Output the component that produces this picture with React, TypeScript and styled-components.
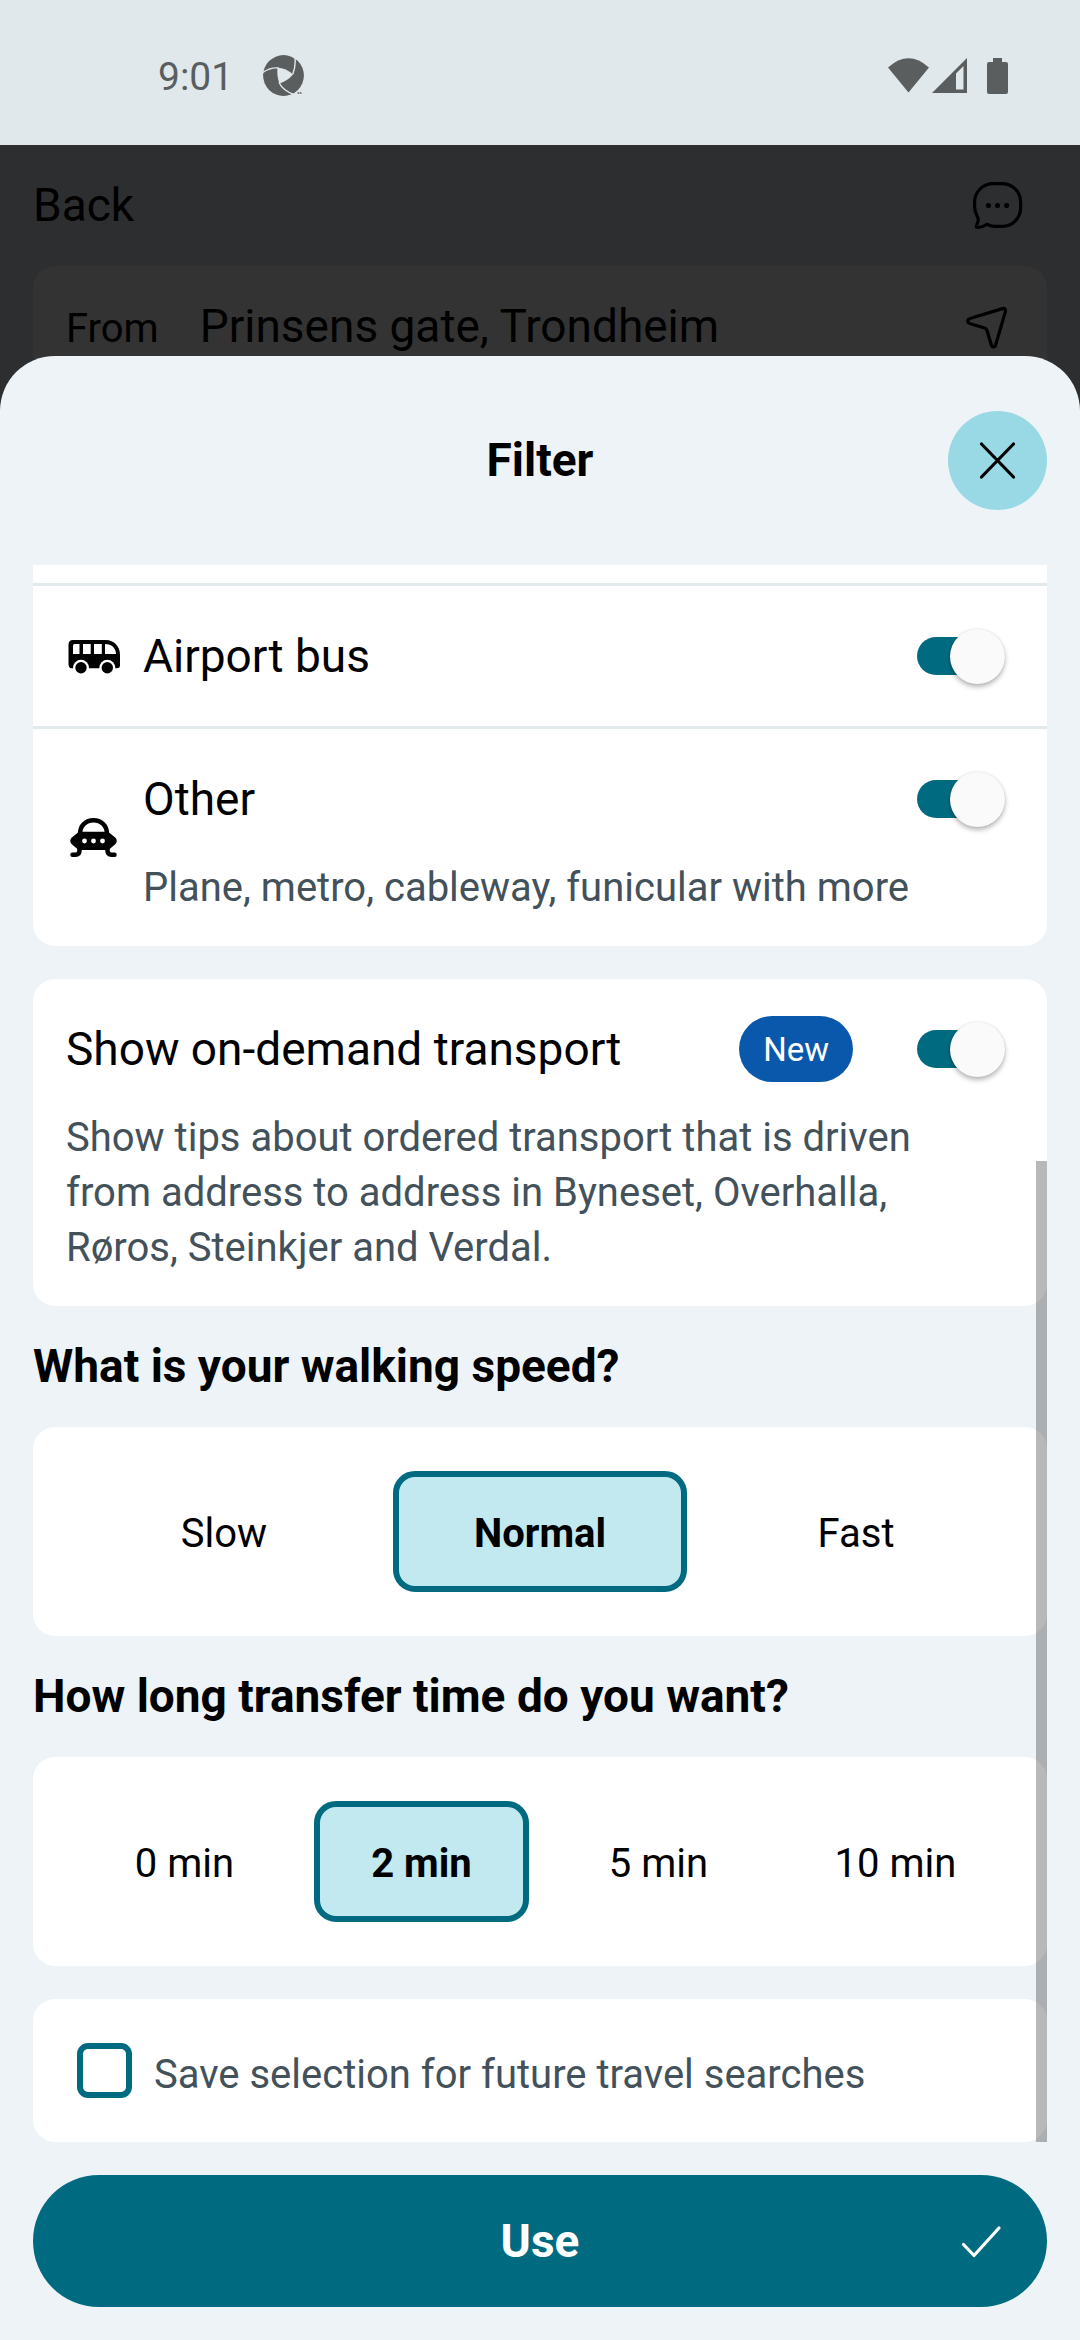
import React, { useState } from "react";
import styled, { createGlobalStyle } from "styled-components";

const color = {
  status: "#e0e8eb",
  statusInk: "#5b5e5f",
  dimmedPage: "#2d2e30",
  dimmedCard: "#333333",
  sheet: "#edf3f6",
  card: "#ffffff",
  line: "#e3eaed",
  ink: "#000000",
  inkSoft: "#43515b",
  teal: "#006b80",
  tealSoft: "#c2e9f0",
  aqua: "#99d9e5",
  badge: "#0a58ab",
};

const GlobalStyle = createGlobalStyle`
  *, *::before, *::after { box-sizing: border-box; }
  body {
    margin: 0;
    font-family: Roboto, "Liberation Sans", sans-serif;
    font-size: 46px;
    line-height: 55px;
    color: ${color.ink};
    background: ${color.sheet};
  }
  h1, h2, p, fieldset { margin: 0; padding: 0; border: 0; min-width: 0; }
  button, input { font: inherit; margin: 0; }
`;

const Screen = styled.div`
  display: flex;
  flex-direction: column;
  min-height: 100vh;
`;

/* ---------- status bar ---------- */

const StatusBar = styled.header`
  display: flex;
  align-items: center;
  justify-content: space-between;
  height: 145px;
  padding: 6px 72px 0 158px;
  background: ${color.status};
  color: ${color.statusInk};
`;

const StatusGroup = styled.div<{ $gap: number }>`
  display: flex;
  align-items: center;
  gap: ${(p) => p.$gap}px;
`;

const Clock = styled.time`
  padding-top: 4px;
  font-size: 39px;
`;

/* ---------- dimmed page and sheet, stacked in one grid cell ---------- */

const Stage = styled.div`
  flex: 1;
  display: grid;
  grid-template-columns: minmax(0, 1fr);
  background: ${color.dimmedPage};
`;

const DimmedPage = styled.div`
  grid-area: 1 / 1;
  align-self: start;
`;

const TopBar = styled.div`
  display: flex;
  align-items: center;
  justify-content: space-between;
  padding: 33px 55px 33px 33px;
`;

const FromCard = styled.div`
  display: flex;
  align-items: center;
  margin: 0 33px;
  padding: 33px;
  border-radius: 22px;
  background: ${color.dimmedCard};
`;

const FromText = styled.div`
  flex: 1;
  display: flex;
  align-items: baseline;
  gap: 41px;
`;

const FromLabel = styled.span`
  font-size: 40px;
`;

const Sheet = styled.main`
  grid-area: 1 / 1;
  display: flex;
  flex-direction: column;
  margin-top: 211px;
  padding: 0 33px 33px;
  border-radius: 55px 55px 0 0;
  background: ${color.sheet};
`;

const SheetHeader = styled.div`
  display: grid;
  grid-template-columns: 1fr auto 1fr;
  align-items: center;
  padding: 55px 0;
`;

const SheetTitle = styled.h1`
  grid-column: 2;
  font-size: 46px;
  font-weight: 700;
`;

const CloseButton = styled.button`
  justify-self: end;
  display: grid;
  place-items: center;
  width: 99px;
  height: 99px;
  padding: 0;
  border: 0;
  border-radius: 50%;
  color: ${color.ink};
  background: ${color.aqua};
`;

const ScrollArea = styled.div`
  position: relative;
`;

const ScrollThumb = styled.div`
  position: absolute;
  right: 0;
  bottom: 0;
  width: 11px;
  height: 62.2%;
  background: rgba(0, 0, 0, 0.28);
`;

/* ---------- cards ---------- */

const Card = styled.section<{ $cutTop?: boolean; $gapAfter?: boolean }>`
  padding-top: ${(p) => (p.$cutTop ? 18 : 0)}px;
  margin-bottom: ${(p) => (p.$gapAfter ? 33 : 0)}px;
  border-radius: ${(p) => (p.$cutTop ? "0 0 22px 22px" : "22px")};
  background: ${color.card};
`;

const SaveCard = styled(Card)`
  margin-top: 33px;
`;

const Row = styled.div<{ $divided?: boolean }>`
  display: flex;
  align-items: center;
  gap: 22px;
  padding: 33px;
  border-top: ${(p) => (p.$divided ? `3px solid ${color.line}` : "0")};
`;

const RowBody = styled.div`
  flex: 1;
  display: flex;
  flex-direction: column;
  gap: 22px;
`;

const RowHead = styled.div`
  display: flex;
  align-items: center;
  gap: 64px;
  height: 74px;
`;

const RowLabel = styled.label`
  flex: 1;
`;

const Description = styled.p`
  max-width: 880px;
  padding-top: 2px;
  margin-bottom: -2px;
  font-size: 40px;
  color: ${color.inkSoft};
`;

const Badge = styled.span`
  padding: 6px 24px 5px;
  border-radius: 33px;
  font-size: 33px;
  color: #ffffff;
  background: ${color.badge};
`;

const Switch = styled.input`
  appearance: none;
  display: grid;
  align-items: center;
  width: 88px;
  height: 55px;
  margin-right: 9px;

  &::before,
  &::after {
    content: "";
    grid-area: 1 / 1;
  }
  &::before {
    width: 82px;
    height: 38px;
    border-radius: 19px;
    background: #b2b2b2;
  }
  &::after {
    width: 55px;
    height: 55px;
    border-radius: 50%;
    background: #fafafa;
    box-shadow: 0 3px 5px rgba(0, 0, 0, 0.28), 0 0 2px rgba(0, 0, 0, 0.12);
  }
  &:checked::before {
    background: ${color.teal};
  }
  &:checked::after {
    justify-self: end;
  }
`;

const SectionTitle = styled.h2`
  padding: 33px 0;
  font-size: 46px;
  font-weight: 700;
`;

const OptionGroup = styled.fieldset`
  display: grid;
  grid-auto-flow: column;
  grid-auto-columns: minmax(0, 1fr);
  gap: 22px;
  padding: 44px;
`;

const Option = styled.label`
  display: grid;
  place-items: center;
  height: 121px;
  padding-top: 4px;
  border: 6px solid transparent;
  border-radius: 22px;
  font-size: 40px;

  &:has(:checked) {
    border-color: ${color.teal};
    font-weight: 700;
    background: ${color.tealSoft};
  }
`;

const HiddenRadio = styled.input`
  position: absolute;
  opacity: 0;
  pointer-events: none;
`;

const SaveRow = styled.div`
  display: flex;
  align-items: center;
  gap: 22px;
  padding: 44px;
`;

const SaveLabel = styled.label`
  padding-top: 4px;
  margin-bottom: -4px;
  font-size: 40px;
  color: ${color.inkSoft};
`;

const Checkbox = styled.input`
  appearance: none;
  width: 55px;
  height: 55px;
  border: 6px solid ${color.teal};
  border-radius: 11px;
  background: ${color.card};

  &:checked {
    background: ${color.teal};
  }
`;

const UseButton = styled.button`
  display: grid;
  grid-template-columns: 1fr auto 1fr;
  align-items: center;
  height: 132px;
  margin-top: 33px;
  padding: 0 38px;
  border: 0;
  border-radius: 66px;
  font-weight: 700;
  color: #ffffff;
  background: ${color.teal};
`;

const UseLabel = styled.span`
  grid-column: 2;
`;

const Icon = styled.svg`
  display: block;
  flex: none;
`;

const EndIcon = styled(Icon)`
  justify-self: end;
`;

/* ---------- icons ---------- */

const lineProps = {
  width: 55,
  height: 55,
  viewBox: "0 0 55 55",
  fill: "none",
  stroke: "currentColor",
  strokeWidth: 3.2,
  strokeLinecap: "round" as const,
  strokeLinejoin: "round" as const,
  "aria-hidden": true,
};

const ApertureIcon = () => (
  <Icon width="42" height="42" viewBox="0 0 42 42" aria-hidden>
    <circle cx="20.5" cy="20.5" r="20.4" fill={color.statusInk} />
    <path d="M14.5 12.8 Q23 13 30 19.5 Q24.5 26 16.3 28.5 Q13.5 20 14.5 12.8Z" fill={color.status} />
    <g fill="none" stroke={color.status} strokeWidth="1.4">
      <path d="M29.7 19.5 Q33.5 10 31.5 0" />
      <path d="M16 13 Q7 12 -1 18" />
      <path d="M16 27.500 Q20 36 32 40" />
    </g>
    <path d="M32.500 41 L34 38 L42 30 L42 42Z" fill={color.status} />
    <path d="M34.500 38h4" stroke={color.statusInk} strokeWidth="1.500" strokeDasharray="1.700 .6" />
  </Icon>
);

const WifiIcon = () => (
  <Icon width="41" height="35" viewBox="0 0 41 35" aria-hidden>
    <path d="M0 9.500 Q20.500 -9 41 9.500 L20.500 34.500Z" fill="currentColor" />
  </Icon>
);

const SignalIcon = () => (
  <Icon width="35" height="35" viewBox="0 0 35 35" aria-hidden>
    <path fillRule="evenodd" d="M35 0V35H0Z M24 15.500V31.500H31.500V8Z" fill="currentColor" />
  </Icon>
);

const BatteryIcon = () => (
  <Icon width="21" height="36" viewBox="0 0 21 36" aria-hidden>
    <path d="M6 0h9v4h4a2 2 0 0 1 2 2v28a2 2 0 0 1-2 2H2a2 2 0 0 1-2-2V6a2 2 0 0 1 2-2h4Z" fill="currentColor" />
  </Icon>
);

const ChatIcon = () => (
  <Icon {...lineProps}>
    <path d="M23.500 5.700H31.500C43 5.700 50.600 14 50.600 24V29.500C50.600 40 43 48.300 32 48.300H25C22 48.300 20 47.800 18.500 46.800C17.300 46 16.500 46.300 15.500 47C13 48.800 10.500 49.600 7.500 49.500C6 49.400 6.200 48.500 6.700 47.300C7.600 45.200 8.800 42.500 8 40C7 37.500 4.600 35 4.600 28.500V24C4.600 14 12.500 5.700 23.500 5.700Z" />
    <g fill="currentColor" stroke="none">
      <circle cx="18.400" cy="27.600" r="2.500" />
      <circle cx="27.500" cy="27.600" r="2.500" />
      <circle cx="36.600" cy="27.600" r="2.500" />
    </g>
  </Icon>
);

const LocationArrowIcon = () => (
  <Icon {...lineProps}>
    <path d="M43.500 8.600L11 18.500C8 19.500 8 22.500 10.800 23.500L25.500 28C27 28.500 27.500 29 28 30.500L32.300 44.800C33.200 47.600 35.800 47.600 36.700 44.800L46.300 12C47 9.500 46 8 43.500 8.600Z" />
  </Icon>
);

const CloseIcon = () => (
  <Icon {...lineProps}>
    <path d="M11.500 11L43.500 44M43.500 11L11.500 44" />
  </Icon>
);

const CheckIcon = () => (
  <EndIcon {...lineProps}>
    <path d="M9.500 30.500L20 41.500L45 14" />
  </EndIcon>
);

const BusIcon = () => (
  <Icon width="55" height="55" viewBox="0 0 55 55" aria-hidden>
    <path
      fillRule="evenodd"
      fill="currentColor"
      d="M7 11H40C48 11 54 17.500 54 25.500V36.500Q54 39 51 39.300H4.500Q2.500 38 2.500 36V15.500Q2.500 11 7 11Z M8.500 15Q7 15 7 16.500V25H13.500V15Z M17 15V25H24.700V15Z M28 15V25H35.800V15Z M39 15V25H50C50 19 45.500 15 39 15Z"
    />
    <circle cx="15" cy="38.800" r="8" fill={color.card} />
    <circle cx="41.300" cy="38.800" r="8" fill={color.card} />
    <circle cx="15" cy="38.800" r="5.700" fill="currentColor" />
    <circle cx="41.300" cy="38.800" r="5.700" fill="currentColor" />
  </Icon>
);

const UfoIcon = () => (
  <Icon width="55" height="55" viewBox="0 0 55 55" aria-hidden>
    <g fill="none" stroke="currentColor" strokeWidth="4.500" strokeLinecap="round" strokeLinejoin="round">
      <path d="M14 24C14 15.500 20 10.300 27.500 10.300S41 15.500 41 24" />
      <path d="M13.500 38V40.500Q13.500 44.700 9.500 44.700H6.500" />
      <path d="M41.500 38V40.500Q41.500 44.700 45.500 44.700H48.500" />
    </g>
    <path d="M13 21.800H42L49.500 27.800Q52 31 49.500 34L42.500 40H12.500L5.500 34Q3 31 5.500 27.800Z" fill="currentColor" />
    <g fill={color.card}>
      <circle cx="18.500" cy="31" r="2.400" />
      <circle cx="27.500" cy="31" r="2.400" />
      <circle cx="36.500" cy="31" r="2.400" />
    </g>
  </Icon>
);

/* ---------- controls ---------- */

function Toggle({ id }: { id: string }) {
  const [on, setOn] = useState(true);
  return (
    <Switch id={id} type="checkbox" role="switch" checked={on} onChange={(e) => setOn(e.target.checked)} />
  );
}

function Options({ name, titleId, values, initial }: { name: string; titleId: string; values: string[]; initial: string }) {
  const [value, setValue] = useState(initial);
  return (
    <Card>
      <OptionGroup aria-labelledby={titleId}>
        {values.map((v) => (
          <Option key={v}>
            <HiddenRadio type="radio" name={name} checked={v === value} onChange={() => setValue(v)} />
            {v}
          </Option>
        ))}
      </OptionGroup>
    </Card>
  );
}

export default function App() {
  const [save, setSave] = useState(false);
  return (
    <Screen>
      <GlobalStyle />
      <StatusBar>
        <StatusGroup $gap={30}>
          <Clock>9:01</Clock>
          <ApertureIcon />
        </StatusGroup>
        <StatusGroup $gap={3}>
          <WifiIcon />
          <StatusGroup $gap={20}>
            <SignalIcon />
            <BatteryIcon />
          </StatusGroup>
        </StatusGroup>
      </StatusBar>

      <Stage>
        <DimmedPage>
          <TopBar>
            <span>Back</span>
            <ChatIcon />
          </TopBar>
          <FromCard>
            <FromText>
              <FromLabel>From</FromLabel>
              <span>Prinsens gate, Trondheim</span>
            </FromText>
            <LocationArrowIcon />
          </FromCard>
        </DimmedPage>

        <Sheet>
          <SheetHeader>
            <SheetTitle>Filter</SheetTitle>
            <CloseButton type="button" aria-label="Close">
              <CloseIcon />
            </CloseButton>
          </SheetHeader>

          <ScrollArea>
            <Card $cutTop $gapAfter>
              <Row $divided>
                <BusIcon />
                <RowBody>
                  <RowHead>
                    <RowLabel htmlFor="airport-bus">Airport bus</RowLabel>
                    <Toggle id="airport-bus" />
                  </RowHead>
                </RowBody>
              </Row>
              <Row $divided>
                <UfoIcon />
                <RowBody>
                  <RowHead>
                    <RowLabel htmlFor="other">Other</RowLabel>
                    <Toggle id="other" />
                  </RowHead>
                  <Description>Plane, metro, cableway, funicular with more</Description>
                </RowBody>
              </Row>
            </Card>

            <Card>
              <Row>
                <RowBody>
                  <RowHead>
                    <RowLabel htmlFor="on-demand">Show on-demand transport</RowLabel>
                    <Badge>New</Badge>
                    <Toggle id="on-demand" />
                  </RowHead>
                  <Description>
                    Show tips about ordered transport that is driven from address to address in Byneset,
                    Overhalla, Røros, Steinkjer and Verdal.
                  </Description>
                </RowBody>
              </Row>
            </Card>

            <SectionTitle id="speed-title">What is your walking speed?</SectionTitle>
            <Options name="speed" titleId="speed-title" values={["Slow", "Normal", "Fast"]} initial="Normal" />

            <SectionTitle id="transfer-title">How long transfer time do you want?</SectionTitle>
            <Options
              name="transfer"
              titleId="transfer-title"
              values={["0 min", "2 min", "5 min", "10 min"]}
              initial="2 min"
            />

            <SaveCard>
              <SaveRow>
                <Checkbox
                  id="save-selection"
                  type="checkbox"
                  checked={save}
                  onChange={(e) => setSave(e.target.checked)}
                />
                <SaveLabel htmlFor="save-selection">Save selection for future travel searches</SaveLabel>
              </SaveRow>
            </SaveCard>
            <ScrollThumb />
          </ScrollArea>

          <UseButton type="button">
            <UseLabel>Use</UseLabel>
            <CheckIcon />
          </UseButton>
        </Sheet>
      </Stage>
    </Screen>
  );
}
